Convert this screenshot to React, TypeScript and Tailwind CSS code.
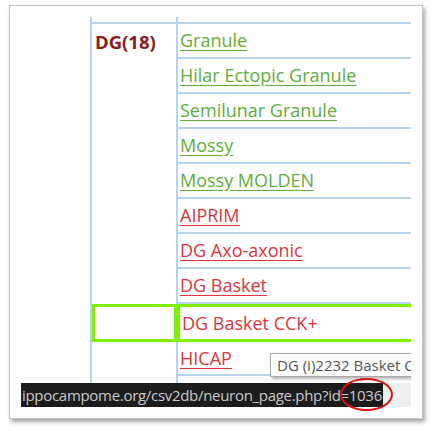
import React from "react";

const green = "text-[#5fae3a] decoration-[#5fae3a]";
const red = "text-[#e2333d] decoration-[#e2333d]";

const rows: { t: string; c: string }[] = [
  { t: "Granule", c: green },
  { t: "Hilar Ectopic Granule", c: green },
  { t: "Semilunar Granule", c: green },
  { t: "Mossy", c: green },
  { t: "Mossy MOLDEN", c: green },
  { t: "AIPRIM", c: red },
  { t: "DG Axo-axonic", c: red },
  { t: "DG Basket", c: red },
];

export default function App() {
  return (
    <div className="w-[432px] h-[431px] bg-white pt-[5px] pl-[9px]" style={{ fontFamily: '"Open Sans", "Noto Sans", sans-serif' }}>
      <div className="relative w-[414px] h-[414px] bg-white border border-[#c4c4c4] shadow-[2px_3px_4px_rgba(0,0,0,0.35)] pl-[11px] pt-[11px]">
        <div className="relative w-[390px] h-[390px] overflow-hidden">
          <div className="ml-[69px] w-[330px] border-l-2 border-[#b7d4ee]">
            <div className="flex h-[5px]">
              <div className="w-[86px] border-r-2 border-[#b7d4ee]" />
              <div className="flex-1" />
            </div>
            <div className="h-[2px] bg-[#b7d4ee]" />
            <div className="flex">
              <div className="w-[86px] border-r-2 border-[#b7d4ee]">
                <div className="h-[35px] flex items-center pl-[3px] text-[18.5px] font-bold text-[#8e1b1b]">DG(18)</div>
              </div>
              <div className="flex-1">
                {rows.map((r) => (
                  <div key={r.t} className="h-[35px] border-b-2 border-[#b7d4ee] flex items-center pl-[2px] pb-[1px]">
                    <span className={`text-[18px] underline underline-offset-[3px] ${r.c}`}>{r.t}</span>
                  </div>
                ))}
              </div>
            </div>
            <div className="flex h-[38px]">
              <div className="w-[85px] border-[3px] border-[#7ff000]" />
              <div className="flex-1 border-[3px] border-[#7ff000] flex items-center pl-[2px]">
                <span className="text-[18px] text-[#e2333d]">DG Basket CCK+</span>
              </div>
            </div>
            <div className="flex">
              <div className="w-[86px] border-r-2 border-[#b7d4ee]" />
              <div className="flex-1">
                <div className="h-[34px] border-b-2 border-[#b7d4ee] flex items-center pl-[2px]">
                  <span className={`text-[18px] underline underline-offset-[3px] ${red}`}>HICAP</span>
                </div>
                <div className="h-[40px]" />
              </div>
            </div>
          </div>

          <div className="absolute left-[249px] top-[336px] w-[170px] h-[24px] bg-white border border-[#a9a9a9] shadow-[2px_2px_3px_rgba(0,0,0,0.3)] pl-[6px] flex items-center whitespace-nowrap overflow-hidden">
            <span className="text-[15px] text-[#555555]">DG (i)2232 Basket CCK+</span>
          </div>

          <div className="absolute left-0 bottom-0 w-[390px] h-[24px] flex">
            <div className="w-[362px] h-full bg-[#1c1c1c] flex items-center pl-[1px] whitespace-nowrap overflow-hidden">
              <span className="text-[15px] tracking-[-0.3px] text-[#c9c9c9]">ippocampome.org/csv2db/neuron_page.php?id=1036</span>
            </div>
            <div className="flex-1 h-full bg-[#efefef]" />
          </div>
        </div>
        <div className="absolute left-[330px] top-[372px] w-[53px] h-[33px] rounded-[50%] border-2 border-[#e01010]" />
      </div>
    </div>
  );
}
